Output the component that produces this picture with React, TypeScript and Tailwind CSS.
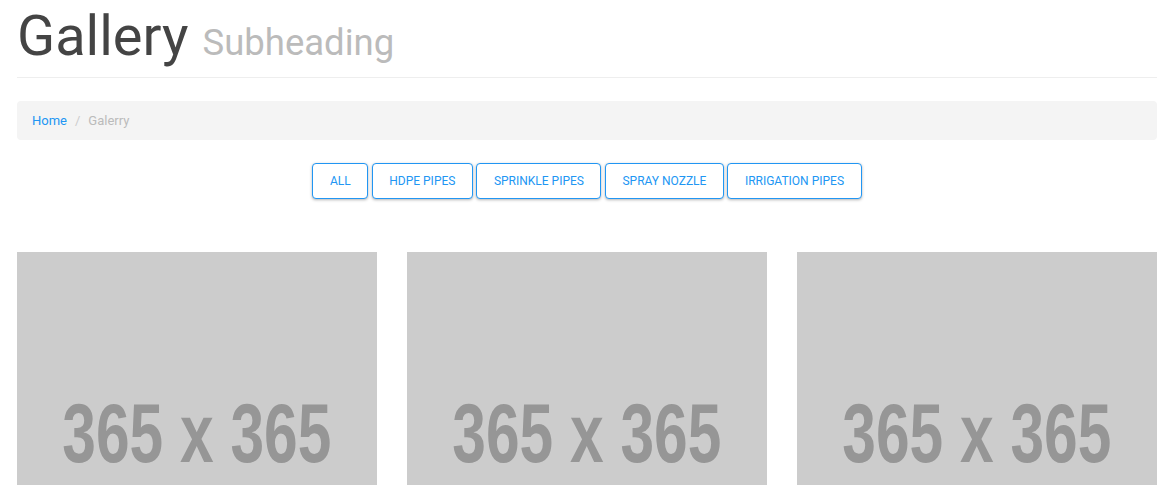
const filters = ["All", "HDPE Pipes", "Sprinkle Pipes", "Spray Nozzle", "Irrigation Pipes"];

function Placeholder() {
  return (
    <div className="flex h-[360px] w-[360px] items-center justify-center overflow-hidden bg-[#cccccc]">
      <span className="inline-block scale-x-[0.72] whitespace-nowrap pt-[2px] font-['Liberation_Sans',sans-serif] text-[84px] font-bold leading-none text-[#969696]">
        365 x 365
      </span>
    </div>
  );
}

export default function App() {
  return (
    <div className="ml-[2px] w-[1170px] px-[15px] font-['Roboto','Liberation_Sans',sans-serif]">
      <div className="mt-[2px] flex items-baseline gap-[14px] border-b border-[#eeeeee] pb-[6px]">
        <h1 className="text-[56px] font-normal leading-[68px] text-[#444444]">Gallery</h1>
        <span className="text-[36.5px] text-[#bbbbbb]">Subheading</span>
      </div>

      <nav className="mt-[23px] flex h-[39px] items-center rounded bg-[#f4f4f4] px-[15px] text-[13px]">
        <a className="text-[#2196f3]">Home</a>
        <span className="px-[8px] text-[#cccccc]">/</span>
        <span className="text-[#bbbbbb]">Galerry</span>
      </nav>

      <div className="mt-[23px] flex justify-center gap-[3.5px]">
        {filters.map((f) => (
          <button
            key={f}
            type="button"
            className="h-[36px] rounded border border-[#2196f3] bg-white px-[16.5px] text-[12px] uppercase text-[#2196f3] shadow-[0_1px_3px_rgba(0,0,0,0.3)]"
          >
            {f}
          </button>
        ))}
      </div>

      <div className="mt-[53px] flex justify-between">
        <Placeholder />
        <Placeholder />
        <Placeholder />
      </div>
    </div>
  );
}
